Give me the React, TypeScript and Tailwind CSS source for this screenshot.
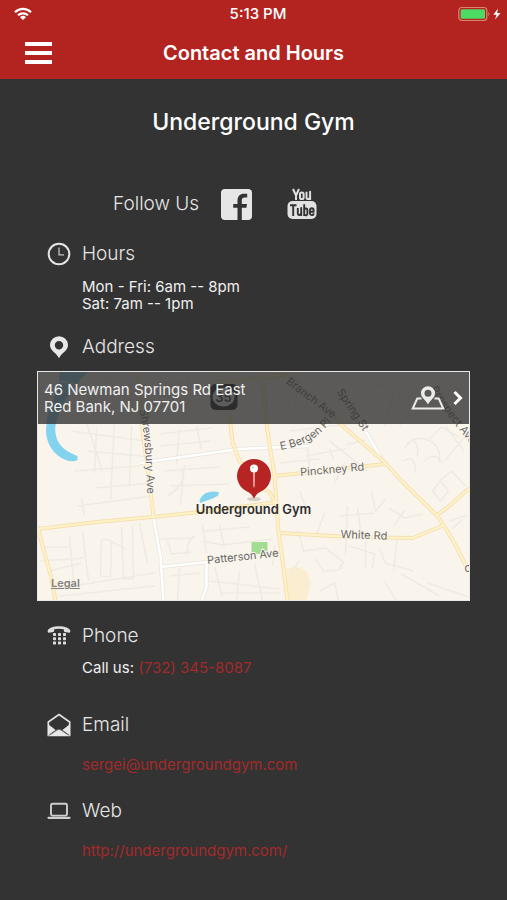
import type { ReactNode } from "react";

function WifiIcon() {
  return (
    <svg viewBox="0 0 18 14" className="h-[14px] w-[18px]" fill="none" stroke="white" strokeWidth="2.2" aria-hidden="true">
      <path d="M1 5.2a11.5 11.5 0 0 1 16 0" />
      <path d="M4 8.3a7.2 7.2 0 0 1 10 0" />
      <path d="M9 13 6 10.2a4.4 4.4 0 0 1 6 0Z" fill="white" stroke="none" />
    </svg>
  );
}

function BatteryIcon() {
  return (
    <svg viewBox="0 0 44 16" className="h-4 w-[44px]" aria-hidden="true">
      <rect x="0.8" y="1.5" width="28" height="13" rx="3" fill="none" stroke="#dc8572" strokeWidth="1.2" />
      <rect x="2.6" y="3.3" width="24.4" height="9.4" rx="1.5" fill="#4cd964" />
      <path d="M30.4 6v4c1.4-.5 1.4-3.500 0-4Z" fill="#dc8572" />
      <path d="m40 2.500-4.600 6.200h3.200L37 13.600l5.600-6.500h-3.500Z" fill="white" />
    </svg>
  );
}

function FacebookIcon() {
  return (
    <svg viewBox="0 0 31 31" className="size-[31px]" aria-hidden="true">
      <rect width="31" height="31" rx="4" fill="#e6e6e6" />
      <path d="M16.500 31V18.700h-4.300v-3.600h4.300v-3.300c0-4.600 2.600-7 6.300-7h3.400v3.700h-2.500c-1.900 0-2.900 1-2.900 2.900v3.700H26l-.6 3.600h-4.600V31Z" fill="#333" />
    </svg>
  );
}

function YouTubeIcon() {
  return (
    <svg viewBox="0 0 30 32" className="h-8 w-[30px]" aria-hidden="true">
      <g fill="none" stroke="#dedede" strokeWidth="2" strokeLinejoin="round">
        <path d="m6 1 3 6.500L12 1M9 7v5" />
        <rect x="13" y="4.500" width="3.600" height="6.600" rx="1.600" />
        <path d="M19.500 3.800v5.800c0 2 2.600 1.700 3.600 0V3.800v8.200" />
      </g>
      <rect x="0.500" y="13" width="29" height="18" rx="5" fill="#e2e2e2" />
      <g fill="none" stroke="#333" strokeWidth="1.900" strokeLinejoin="round">
        <path d="M3 17.200h6.500M6.200 17v11" />
        <path d="M10.800 20v5.500c0 2.200 2.400 1.700 3.400 0V20v8" />
        <path d="M17.200 16.200V28M17.200 21.400c1.200-1.400 3.200-1.200 3.200.8v3.400c0 2-2 2.300-3.200.8" />
        <path d="M26.600 25.200c0 2.600-3.600 2.600-3.600 0v-3c0-2.600 3.600-2.600 3.600 0v1.600H23" />
      </g>
    </svg>
  );
}

function ClockIcon() {
  return (
    <svg viewBox="0 0 24 24" className="size-6" fill="none" stroke="#e4e4e4" aria-hidden="true">
      <circle cx="12" cy="12" r="10.300" strokeWidth="2" />
      <path d="M12 5.500v7.300h5" strokeWidth="1.300" stroke="#c4c4c4" />
    </svg>
  );
}

function PinIcon() {
  return (
    <svg viewBox="0 0 24 24" className="size-6" aria-hidden="true">
      <path fillRule="evenodd" d="M12 1.200a9 9 0 0 0-9 9c0 5.400 6.200 7.300 9 13 2.800-5.700 9-7.600 9-13a9 9 0 0 0-9-9Zm0 4.800a4.200 4.200 0 1 1 0 8.400A4.200 4.200 0 0 1 12 6Z" fill="#e8e8e8" />
    </svg>
  );
}

function PhoneIcon() {
  const rows = [9, 13.200, 17.400];
  const cols = [6.500, 11.500, 16.500];
  return (
    <svg viewBox="0 0 24 24" className="size-6" fill="#dedede" aria-hidden="true">
      <path d="M.8 6.200C2.500 3.600 7 2.200 12 2.200s9.500 1.400 11.200 4c.5 1-.2 2.600-1 2.600l-4.600-.8c-.8-.2-.8-1.800-.8-2.700-3-.8-6.600-.8-9.600 0 0 .9 0 2.500-.8 2.700l-4.600.8C1 8.800.3 7.200.8 6.200Z" />
      {rows.map((y) => cols.map((x) => <rect key={`${x}-${y}`} x={x - 0.500} y={y} width="3" height="3" rx=".7" />))}
    </svg>
  );
}

function MailIcon() {
  return (
    <svg viewBox="0 0 24 24" className="size-6" aria-hidden="true">
      <path d="M1.300 9 12 1.500 22.700 9v13.500H1.300Z" fill="#333" stroke="#dedede" strokeWidth="1.700" strokeLinejoin="round" />
      <path d="m1 11 7.600 6.100L1 22.500Zm22 0-7.600 6.100L23 22.500ZM2 23l7.600-5.500 2.400-1.100 2.400 1.100L22 23Z" fill="#e6e6e6" />
      <path d="m1.500 22.600 8-5.400q2.500-1.600 5 0l8 5.400" fill="none" stroke="#777" strokeWidth=".8" />
    </svg>
  );
}

function LaptopIcon() {
  return (
    <svg viewBox="0 0 24 24" className="size-6" fill="none" stroke="#cfcfcf" strokeWidth="1.900" aria-hidden="true">
      <rect x="4" y="4.800" width="16" height="11.800" rx="1.500" />
      <path d="M1.500 18.800h21" strokeWidth="2.200" strokeLinecap="round" />
    </svg>
  );
}

function MapPinIcon() {
  return (
    <svg viewBox="0 0 34 24" className="h-6 w-[34px] shrink-0" fill="none" stroke="#ebebeb" aria-hidden="true">
      <path d="M10.500 12.500H6.300L1.700 22.600h30.600l-4.600-10.100h-4.200" strokeWidth="2" />
      <path fillRule="evenodd" d="M17 .3a7 7 0 0 0-7 7c0 4.700 4.400 6.200 7 11.200 2.600-5 7-6.500 7-11.200a7 7 0 0 0-7-7Zm0 3.500a3.500 3.500 0 1 1 0 7 3.500 3.500 0 0 1 0-7Z" fill="#ebebeb" stroke="none" />
    </svg>
  );
}

const minorRoads = [
  "M80 400 103 470M72 430l74 10M88 450l64 6M97 428l-2 44M115 420l-4 78M132 425l-2 60M75 470l65-5M95 487l58-5M78 505l74-10M85 515l-3-18",
  "M160 433l52-6M161 445l50-5M180 428l-3 35M197 425l5 24M165 470l55-4M170 485l60-2M185 464l-4 40M168 495q20-12 14-27",
  "M45 546h25M70 535l4 45M83 530l6 50M102 540l-1 35 10 1 1-36M101 540q6-3 10 0l15 8M122 526l2 52h10l-1-54M140 522l8 40M50 570l32-8M55 588l100-16M60 595l95-10M40 560l45-3",
  "M160 538l35-1M168 540l4 13 20-2M195 535q-8 5-7 18M203 524l4 28M205 530l45-4M220 524l5 22M203 540l20 4 50-6M215 566l8 30M240 570l-3 30M255 562l8 38M275 545l-2 20",
  "M170 575l30-3M180 567l-2 32M210 580l70 8M220 592h60M300 490l10 25M325 512l-8 22M348 505l-2 50M358 507l4 30M340 515l35-3",
  "M299 530l5 20 22-3 18 14-5 8-15 1-8-12M350 545l25 8-2 14M366 535v32M300 560l-10 12M380 548l6 14 28 8M398 535l-4 35M402 573l38 22M428 582l42 14M385 580l12 20M320 590l15-8 4 18",
  "M372 490l4 20 10-12M390 507l15 10 18-4M395 524l10-15M440 480l12-10 14 15M433 490l8-10 8 10-8 10ZM450 520l18-6M453 528l10-10",
  "M405 448q8-16 26-8 12 8 8 22M413 438q8 8 4 18M430 438l12-12 18 10M425 460q10-10 18 2M404 460q12-8 12 12M446 425l18 25M400 425q7-15 20-10M470 430l-25 30",
  "M306 430l4 35M306 455l40-7M346 444l20-5M330 448l4 10M290 430l60-7M330 440l38 30M345 462l-10 20M280 462l40-4",
  "M60 380l65 15M100 376l60 30M170 380l42 8M160 395l52 8M190 374l-4 45M300 380l-5 30M345 378l20 16M370 380l45 18M395 390l-10 35",
];

const whiteRoads = ["M140 462 240 448 310 445", "M154 516 161 556 164 600", "M161 566 207 561 207 586 202 600", "M350 398 366 430 385 463"];

const mainRoads = [
  "M38 528 97 521 153 516 200 511 278 501",
  "M138 371 143 430 151 490 154 516",
  "M38 525 43 545 52 577 56 600",
  "M212 382 250 378 290 373",
  "M263 376 268 430 275 475 279 530 283 560 288 600",
  "M224 374 230 415 233 442 240 460 249 470",
  "M262 487 270 491 277 504",
  "M275 475 330 469 386 463",
  "M290 375 335 418 385 461 403 481 438 515 446 527 457 546 468 568",
  "M280 532 350 536 413 537 445 524",
  "M438 514 452 503 470 487",
];

function StreetMap() {
  return (
    <svg viewBox="38 371 432 228" preserveAspectRatio="xMidYMid slice" className="block h-full w-full" role="img" aria-label="Map of Underground Gym">
      <defs>
        <path id="shrewsbury" d="M140 409C146 435 146 455 148 500" />
        <path id="bergen" d="M281 449C308 444 319 437 336 415" />
        <path id="prospect" d="M431 388C445 410 455 425 488 462" />
      </defs>
      <rect x="38" y="371" width="432" height="229" fill="#f9f5ed" />
      <path d="M286 568q12-5 22 3l3 12-4 17H290Z" fill="#fbeed0" />
      <path d="M60 371 88 371C74 385 60 405 56 424 54 442 65 450 78 455L78 459Q72 462 64 458C50 451 45 436 47 424 48 404 61 392 60 371Z" fill="#83d3ee" />
      <path d="M200 500c2-7 9-11 19-9 2 5-6 6-18 11Z" fill="#83d3ee" />
      <path d="M252 541h16v12h-16Z" fill="#a3dc93" />
      <g fill="none" strokeLinejoin="round">
        {minorRoads.map((d) => <path key={d} d={d} stroke="#efebe4" strokeWidth="1.600" />)}
        {whiteRoads.map((d) => <path key={d} d={d} stroke="#e8e5de" strokeWidth="4" />)}
        {whiteRoads.map((d) => <path key={d} d={d} stroke="#ffffff" strokeWidth="2.600" />)}
        {mainRoads.map((d) => <path key={d} d={d} stroke="#f5e0b0" strokeWidth="4" />)}
        {mainRoads.map((d) => <path key={d} d={d} stroke="#fff2c8" strokeWidth="2.200" />)}
      </g>
      <rect x="211" y="383" width="27" height="26" rx="5" fill="#111" />
      <ellipse cx="224" cy="396" rx="11" ry="9.500" fill="#fff" />
      <g className="font-[Inter,sans-serif] text-[11px]" fill="#6b6866" stroke="#f9f5ed" strokeWidth="2" paintOrder="stroke">
        <text x="224" y="401" fontSize="13" fontWeight="600" fill="#222" stroke="none" textAnchor="middle">35</text>
        <text><textPath href="#shrewsbury">Shrewsbury Ave</textPath></text>
        <text><textPath href="#bergen">E Bergen Pl</textPath></text>
        <text><textPath href="#prospect">Prospect Ave</textPath></text>
        <text transform="translate(286 382) rotate(37)">Branch Ave</text>
        <text transform="translate(337 391) rotate(56)">Spring St</text>
        <text transform="translate(301 475) rotate(-5)">Pinckney Rd</text>
        <text transform="translate(341 537) rotate(2)">White Rd</text>
        <text transform="translate(208 563) rotate(-6)">Patterson Ave</text>
        <text x="465" y="571">c</text>
      </g>
    </svg>
  );
}

function GymMarker() {
  return (
    <svg viewBox="0 0 36 44" className="h-[44px] w-9" aria-hidden="true">
      <ellipse cx="18" cy="41" rx="7" ry="2" fill="#000" opacity=".15" />
      <path d="M18 1a17 17 0 0 0-6 32.900c2.500 1 4 3 6 6.600 2-3.600 3.500-5.600 6-6.600A17 17 0 0 0 18 1Z" fill="#b72424" />
      <path d="M17.200 12h1.600l-.2 16-.6 2-.6-2Z" fill="#f0cccc" />
      <circle cx="18" cy="10.500" r="4" fill="#fff" />
      <circle cx="17" cy="9.500" r="1" fill="#ccc" />
    </svg>
  );
}

function SectionTitle({ icon, children }: { icon: ReactNode; children: ReactNode }) {
  return (
    <h2 className="flex h-6 items-center gap-[11px] pl-[10px] text-[19px] leading-6 font-light text-[#e6e6e6]">
      {icon}
      {children}
    </h2>
  );
}

export default function App() {
  return (
    <div className="min-h-screen bg-[#333333] font-[Inter,sans-serif] text-[#f0f0f0]">
      <header className="bg-[#b32421] text-white">
        <div className="grid h-[27px] grid-cols-[1fr_auto_1fr] items-center pr-[5px] pl-[14px]">
          <WifiIcon />
          <span className="text-center text-[15px] leading-[17px] font-medium">5:13 PM</span>
          <span className="justify-self-end"><BatteryIcon /></span>
        </div>
        <div className="grid h-[52px] grid-cols-[1fr_auto_1fr] items-center px-[25px]">
          <button type="button" aria-label="Open menu" className="flex w-[27px] flex-col gap-[5px]">
            <span className="h-1 w-full bg-white" />
            <span className="h-1 w-full bg-white" />
            <span className="h-1 w-full bg-white" />
          </button>
          <h1 className="text-[20px] leading-6 font-semibold">Contact and Hours</h1>
        </div>
      </header>

      <main className="px-[37px] pt-7 pb-9">
        <p className="text-center text-[23px] leading-[30px] font-medium text-white">Underground Gym</p>

        <div className="mt-[50px] flex h-[34px] items-center pl-[76px]">
          <span className="w-[108px] text-[19px] leading-6 font-light text-[#e6e6e6]">Follow Us</span>
          <a href="#facebook" aria-label="Facebook" className="w-[66px]"><FacebookIcon /></a>
          <a href="#youtube" aria-label="YouTube"><YouTubeIcon /></a>
        </div>

        <section className="mt-[21px]">
          <SectionTitle icon={<ClockIcon />}>Hours</SectionTitle>
          <p className="mt-3 pl-[45px] text-[15px] leading-[17px]">
            Mon - Fri: 6am -- 8pm
            <br />
            Sat: 7am -- 1pm
          </p>
        </section>

        <section className="mt-[23px]">
          <SectionTitle icon={<PinIcon />}>Address</SectionTitle>
          <div className="relative mt-3 h-[230px] overflow-hidden border border-[#e8e8e8]">
            <StreetMap />
            <a href="#directions" className="absolute inset-x-0 top-0 flex h-[52px] items-center bg-[#333333]/80 pr-[6px] pl-[6px]">
              <address className="flex-1 text-[15px] leading-[17px] not-italic">
                46 Newman Springs Rd East
                <br />
                Red Bank, NJ 07701
              </address>
              <MapPinIcon />
              <svg viewBox="0 0 10 16" className="ml-2 h-4 w-[10px]" fill="none" stroke="white" strokeWidth="3" aria-hidden="true">
                <path d="m1.500 2 6 6-6 6" />
              </svg>
            </a>
            <div className="absolute inset-x-0 top-[86px] flex flex-col items-center">
              <GymMarker />
              <span className="text-[13px] leading-[14px] font-semibold text-[#2e2e2e]">Underground Gym</span>
            </div>
            <a href="#legal" className="absolute bottom-[10px] left-[13px] text-[11px] leading-[14px] font-semibold text-[#85827d] underline">Legal</a>
          </div>
        </section>

        <section className="mt-[23px]">
          <SectionTitle icon={<PhoneIcon />}>Phone</SectionTitle>
          <p className="mt-[10px] pl-[45px] text-[15px] leading-5">
            Call us: <a href="tel:+17323458087" className="text-[#a32a2a]">(732) 345-8087</a>
          </p>
        </section>

        <section className="mt-[35px]">
          <SectionTitle icon={<MailIcon />}>Email</SectionTitle>
          <a href="mailto:sergei@undergroundgym.com" className="mt-[18px] block pl-[45px] text-[15px] leading-5 text-[#a32a2a]">sergei@undergroundgym.com</a>
        </section>

        <section className="mt-6">
          <SectionTitle icon={<LaptopIcon />}>Web</SectionTitle>
          <a href="http://undergroundgym.com/" className="mt-[18px] block pl-[45px] text-[15px] leading-5 text-[#a32a2a]">http://undergroundgym.com/</a>
        </section>
      </main>
    </div>
  );
}
